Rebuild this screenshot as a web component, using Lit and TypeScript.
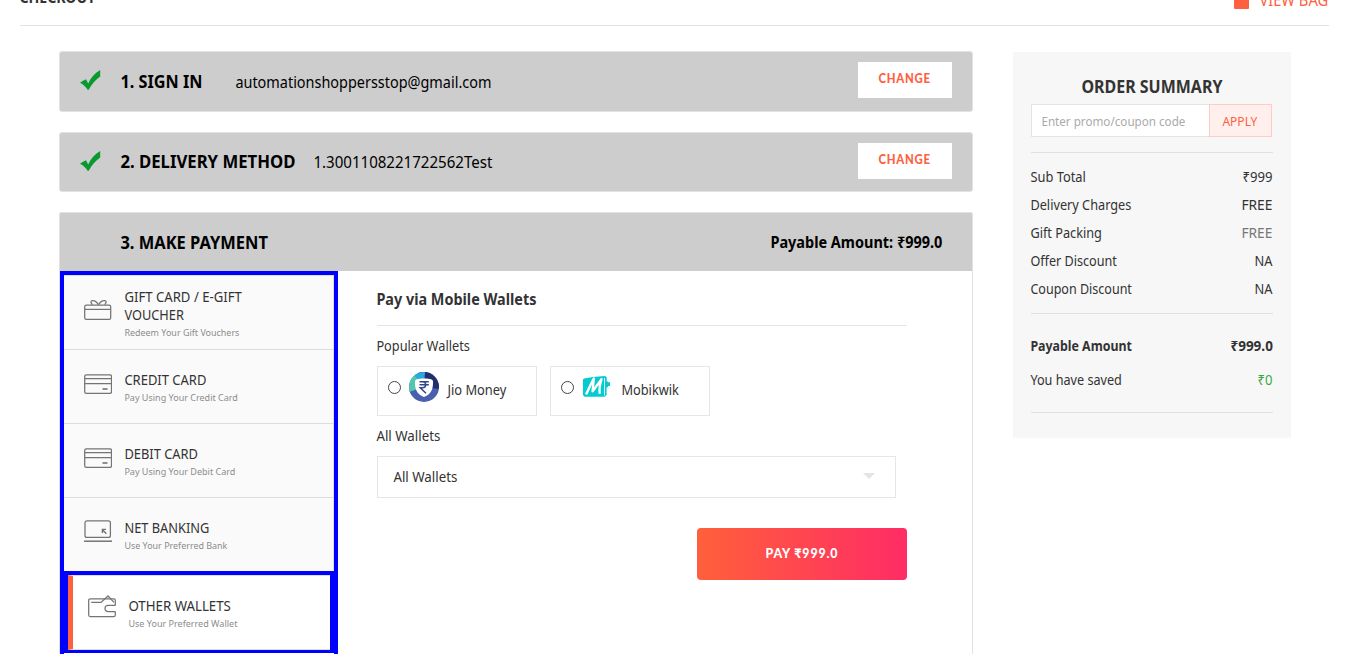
import { LitElement, html, css, svg } from "lit";
import { customElement, property } from "lit/decorators.js";

/** A run of text condensed or widened to an exact advance width. */
@customElement("fit-text")
class FitText extends LitElement {
  @property({ type: Number }) w = 0;
  @property() text = "";

  static styles = css`
    :host { display: inline-block; white-space: nowrap; vertical-align: top; flex: none; text-align: left; }
    .run { display: inline-block; transform-origin: 0 50%; vertical-align: top; }
  `;

  render() {
    return html`<span class="run">${this.text}</span>`;
  }

  updated() {
    const run = this.renderRoot.querySelector(".run") as HTMLElement;
    const natural = run.getBoundingClientRect().width;
    this.style.width = `${this.w}px`;
    run.style.transform = `translateX(-0.6px) scaleX(${this.w / natural})`;
  }
}

const t = (text: string, w: number, cls = "") =>
  html`<fit-text class=${cls} .w=${w} .text=${text}></fit-text>`;

const tick = html`<svg class="tick" width="21" height="20" viewBox="0 0 21 20">
  <path d="M0 12.7 3 10.8 6 9.2 8.2 13.6C10.6 8 14.4 3.4 20.2 0V6.4C15.4 9.6 11.8 14 8.7 19.8H7.6C5.6 16.5 3.2 14.2 0 12.7Z" fill="#099a2f"/>
</svg>`;

const cardShape = svg`
  <rect x=".7" y=".8" width="26.8" height="18.6" rx="1.6"/>
  <path d="M1 4.6H27.5M1 9.6H27.5"/><path d="M18.5 15H23.5" stroke-width="1.6"/>`;

const icons: Record<string, unknown> = {
  gift: svg`
    <rect x=".7" y="5.2" width="26" height="14.2" rx="1.6"/><path d="M1 9.4H26.5"/>
    <path d="M14.5 4.8C12.8 2 10.8.4 8.3.7 6.9.9 6.6 2.2 7.4 3.2L8.3 4.8M14.5 4.8C16.2 2 18.2.4 20.8.7 22.2.9 22.5 2.2 21.7 3.2L20.8 4.8"/>`,
  card: cardShape,
  net: svg`
    <rect x="1" y=".8" width="25.4" height="16.6" rx="2"/><path d="M0 21.2H28" stroke-width="1.5"/>
    <path d="M18.3 9.5 22.4 13.8M18.4 13V9.4H22" stroke-width="1.4"/>`,
  purse: svg`
    <path d="M27.3 10.4V5.6C27.3 4.4 26.7 3.9 25.7 3.9H2.4C1.3 3.9.7 4.5.7 5.5V20C.7 21 1.3 21.5 2.3 21.5H25.6C26.7 21.5 27.3 21 27.3 19.9V16.5"/>
    <path d="M3.2 7.4H13L20 1 26 7.4M27.4 10.4H20.3C18.4 10.4 17 11.6 17 13.5S18.4 16.5 20.3 16.5H27.4"/>`,
};

const icon = (name: string) =>
  html`<svg class="icon ${name}" width="28" height="23" viewBox="0 0 28 23" fill="none" stroke="#747474" stroke-width="1.25">${icons[name]}</svg>`;

const jio = html`<svg class="jio" width="30" height="30" viewBox="0 0 30 30">
  <defs><clipPath id="disc"><circle cx="15" cy="15" r="15"/></clipPath></defs>
  <g clip-path="url(#disc)">
    <rect width="30" height="30" fill="#4860ae"/>
    <path d="M15 15 8 0H30V17Z" fill="#21306d"/>
    <path d="M15 15 0 20V0H10Z" fill="#53c6af"/>
    <path d="M15 15 6 4 9 0H16Z" fill="#28a9df"/>
  </g>
  <path d="M6 9.5C6 7.6 8 6.6 15 6.5 22 6.6 24 7.6 24 9.5 24.2 16 23 22 15 25 7 22 5.8 16 6 9.5Z" fill="#fff"/>
  <path d="M10.5 9.8H19.8M10.5 12.8H19.8M11 9.8H13.7C17.8 9.8 17.8 15.7 13.5 15.7H11.2L17 21.3" fill="none" stroke="#34458c" stroke-width="1.5"/>
</svg>`;

const mobikwik = html`<svg class="mobi" width="28" height="21" viewBox="0 0 28 21">
  <path d="M1 2.5 10 1 22 0 23.7 1.2V5.5H25V6.2H27V10H25V11.2H23.6V19L21.8 20.8H1.5L0 19V3.5Z" fill="#04cbd0"/>
  <path d="M3 18.3C5 15 7 9 10.8 2.5L9.6 15.2 18.5 3.2C17 8 16 13 16.8 17.8" fill="none" stroke="#fff" stroke-width="2.4" stroke-linejoin="round"/>
  <path d="M21.5 2V19.5" stroke="#fff" stroke-width=".9"/>
</svg>`;

const methods = [
  { icon: "gift", lines: [["GIFT CARD / E-GIFT", 117.5], ["VOUCHER", 59.5]], sub: ["Redeem Your Gift Vouchers", 115], cls: "first" },
  { icon: "card", lines: [["CREDIT CARD", 82]], sub: ["Pay Using Your Credit Card", 113.5], cls: "" },
  { icon: "card", lines: [["DEBIT CARD", 73.5]], sub: ["Pay Using Your Debit Card", 111], cls: "" },
  { icon: "net", lines: [["NET BANKING", 85]], sub: ["Use Your Preferred Bank", 103], cls: "last" },
  { icon: "purse", lines: [["OTHER WALLETS", 102.5]], sub: ["Use Your Preferred Wallet", 109], cls: "active" },
] as { icon: string; lines: [string, number][]; sub: [string, number]; cls: string }[];

const charges: [string, number, string, number, string][] = [
  ["Sub Total", 55.5, "₹999", 30, ""],
  ["Delivery Charges", 101, "FREE", 31, ""],
  ["Gift Packing", 71.5, "FREE", 31, "muted"],
  ["Offer Discount", 86.5, "NA", 18, ""],
  ["Coupon Discount", 101.5, "NA", 18, ""],
];

@customElement("app-root")
class AppRoot extends LitElement {
  static styles = css`
    :host { display: block; width: 1366px; height: 654px; overflow: hidden; background: #fff;
      font-family: "Noto Sans", sans-serif; font-size: 13.6px; color: #333; }
    * { box-sizing: border-box; }
    svg { display: block; flex: none; }
    header { display: flex; justify-content: space-between; align-items: flex-start; width: 1309px; height: 26px;
      margin-left: 20px; border-bottom: 1px solid #e2e2e2; line-height: 20px; }
    .heading { font-size: 15.5px; font-weight: 700; margin-top: -13px; }
    .bag { display: flex; color: #ff6040; font-size: 15.5px; margin-top: -10px; }
    .bagicon { width: 15px; height: 19px; background: #ff6040; border-radius: 0 0 1px 1px; margin-right: 11px; }
    main { display: flex; align-items: flex-start; padding: 25px 0 0 59px; }
    .steps { display: flex; flex-direction: column; gap: 20px; width: 914px; }
    .step { display: flex; align-items: flex-start; height: 61px; border: 1px solid #e2e2e2; border-radius: 3px;
      background: #cdcdcd; padding: 0 20px; color: #000; }
    .step.second { height: 60px; }
    .tick { margin: 18px 19px 0 0; }
    .title { font-size: 17.6px; font-weight: 700; line-height: 58px; padding-left: 0.6px; }
    .value { font-size: 15.6px; line-height: 60px; }
    .first .value { margin-left: 33.5px; }
    .second .title { line-height: 56px; }
    .second .value { line-height: 58px; margin-left: 19px; }
    .change { width: 94px; height: 36px; margin: 10px 0 0 auto; background: #fff; color: #ff6040; border: 0; padding: 0 0 3px;
      font: 900 13px/33px Lato, "Noto Sans", sans-serif; letter-spacing: 0.9px; text-align: center; }
    .payment { border: 1px solid #e2e2e2; border-bottom: 0; border-radius: 3px 3px 0 0; height: 460px; }
    .payhead { display: flex; justify-content: space-between; height: 58px; background: #cdcdcd; color: #000; padding: 0 29.4px 0 60px; }
    .payable { font-size: 15.6px; font-weight: 700; line-height: 58px; }
    .paybody { display: flex; }
    .methods { width: 278px; height: 400px; border: 4px solid #00f; border-bottom: 0; background: #fff; }
    .method { display: flex; gap: 12.5px; height: 74px; padding: 21px 0 0 20px; background: #fafafa;
      border-right: 1px solid #dedede; border-bottom: 1px solid #dcdcdc; }
    .method.first { height: 75px; padding-top: 12px; border-top: 1px solid #dedede; }
    .method.last { height: 73px; border-bottom: 0; }
    .method.active { height: 82px; background: #fff; border: 4px solid #00f; border-bottom-width: 3px; padding: 0; }
    .inner { display: flex; gap: 12.5px; flex: 1; border: 1px solid #dedede; border-left: 5px solid #ff6040; border-right: 0; padding: 21px 0 0 15px; }
    .lines { display: flex; flex-direction: column; line-height: 18px; }
    .sub { font-size: 9.6px; line-height: 17px; color: #8c8c8c; }
    .icon { margin-top: 3px; }
    .icon.gift { margin-top: 12px; }
    .icon.net { margin-top: 1px; }
    .icon.purse { margin-top: -2.5px; }
    .form { width: 530px; margin-left: 39px; display: flex; flex-direction: column; align-items: flex-start; }
    .formtitle { font-size: 15.6px; font-weight: 700; line-height: 20px; padding: 18px 0 16px; width: 530px; height: 55px; border-bottom: 1px solid #e4e4e4; }
    .label { line-height: 20px; margin-top: 10px; }
    .wallets { display: flex; gap: 13px; margin: 10px 0 0; }
    .wallet { display: flex; align-items: flex-start; width: 160px; height: 50px; border: 1px solid #e6e6e6; padding-left: 10px; line-height: 46px; }
    .radio { width: 13px; height: 13px; border: 1px solid #444; border-radius: 50%; margin: 14px 8px 0 0; }
    .jio { margin: 5px 9px 0 0; }
    .mobi { margin: 9px 11px 0 1px; }
    .select { display: flex; justify-content: space-between; width: 519px; height: 42px; border: 1px solid #e6e6e6;
      margin-top: 10px; padding: 0 20px 0 16px; line-height: 40px; }
    .arrow { margin-top: 16px; }
    .pay { align-self: flex-end; width: 210px; height: 52px; margin-top: 30px; border: 0; border-radius: 4px; padding: 0 0 1px;
      background: linear-gradient(90deg, #ff603b, #ff2c65); color: #fff; text-align: center;
      font: 900 13px/49px Lato, "Noto Sans", sans-serif; letter-spacing: 0.9px; }
    aside { width: 278px; height: 386px; margin: 1px 0 0 40px; background: #f7f7f7; padding: 24px 18px 0; }
    .sumtitle { display: block; width: 242px; text-align: center; font-size: 17.6px; font-weight: 700; line-height: 21px; height: 28px; }
    .promo { display: flex; width: 241px; height: 33px; font-size: 12.6px; line-height: 33px; }
    .field { width: 178px; border: 1px solid #e4e4e4; border-right: 0; background: #fff; color: #aaa; padding-left: 10px; }
    .apply { width: 63px; border: 1px solid #ffccc3; background: #fff0ee; color: #ff6040; text-align: center; }
    .rule { height: 1px; background: #e0e0e0; margin-top: 15px; }
    .rows { padding-top: 10px; }
    .row { display: flex; justify-content: space-between; line-height: 28px; }
    .rows + .rule { margin-top: 10px; }
    .total { font-weight: 700; padding-top: 18px; }
    .saved { padding-top: 6px; }
    .saved + .rule { margin-top: 18px; }
    .muted { color: #777; }
    .green { color: #3aa83f; }
  `;

  render() {
    return html`
      <header>
        ${t("CHECKOUT", 76, "heading")}
        <div class="bag"><span class="bagicon"></span>${t("VIEW BAG", 68.8)}</div>
      </header>
      <main>
        <section class="steps">
          <div class="step first">${tick}${t("1. SIGN IN", 82, "title")}${t("automationshoppersstop@gmail.com", 256, "value")}
            <button class="change">${t("CHANGE", 52.5)}</button></div>
          <div class="step second">${tick}${t("2. DELIVERY METHOD", 175, "title")}${t("1.3001108221722562Test", 179, "value")}
            <button class="change">${t("CHANGE", 52.5)}</button></div>
          <div class="payment">
            <div class="payhead">${t("3. MAKE PAYMENT", 147.5, "title")}${t("Payable Amount: ₹999.0", 172, "payable")}</div>
            <div class="paybody">
              <nav class="methods">
                ${methods.map((m) => {
                  const body = html`${icon(m.icon)}<div class="lines">${m.lines.map(([s, w]) => t(s, w))}${t(m.sub[0], m.sub[1], "sub")}</div>`;
                  return html`<div class="method ${m.cls}">${m.cls === "active" ? html`<div class="inner">${body}</div>` : body}</div>`;
                })}
              </nav>
              <div class="form">
                <div class="formtitle">${t("Pay via Mobile Wallets", 160)}</div>
                ${t("Popular Wallets", 93.5, "label")}
                <div class="wallets">
                  <div class="wallet"><span class="radio"></span>${jio}${t("Jio Money", 59)}</div>
                  <div class="wallet"><span class="radio"></span>${mobikwik}${t("Mobikwik", 57.5)}</div>
                </div>
                ${t("All Wallets", 64, "label")}
                <div class="select">${t("All Wallets", 64)}
                  <svg class="arrow" width="12" height="6" viewBox="0 0 12 6"><path d="M0 0H12L6 6Z" fill="#e4e4e4"/></svg></div>
                <button class="pay">${t("PAY ₹999.0", 73)}</button>
              </div>
            </div>
          </div>
        </section>
        <aside>
          <div class="sumtitle">${t("ORDER SUMMARY", 141)}</div>
          <div class="promo"><div class="field">${t("Enter promo/coupon code", 144)}</div><div class="apply">${t("APPLY", 35)}</div></div>
          <div class="rule"></div>
          <div class="rows">
            ${charges.map(([a, aw, b, bw, c]) => html`<div class="row">${t(a, aw)}${t(b, bw, c)}</div>`)}
          </div>
          <div class="rule"></div>
          <div class="row total">${t("Payable Amount", 101.5)}${t("₹999.0", 42.5)}</div>
          <div class="row saved">${t("You have saved", 91.5)}${t("₹0", 15, "green")}</div>
          <div class="rule"></div>
        </aside>
      </main>`;
  }
}
